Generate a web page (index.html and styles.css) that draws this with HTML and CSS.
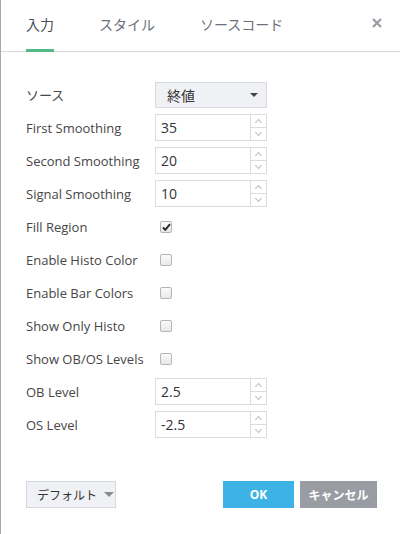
FILE: index.html
```html
<!DOCTYPE html>
<html>
<head>
<meta charset="utf-8">
<link rel="stylesheet" href="styles.css">
</head>
<body>
<div class="dialog">
  <div class="tabs">
    <div class="tab active">入力</div>
    <div class="tab">スタイル</div>
    <div class="tab">ソースコード</div>
    <div class="close"><svg width="10" height="10" viewBox="0 0 10 10"><path d="M1 1 L9 9 M9 1 L1 9" stroke="#9a9ca3" stroke-width="2.2" fill="none"/></svg></div>
  </div>
  <div class="content">
    <div class="row"><div class="label">ソース</div><div class="select"><span>終値</span><span class="caret"></span></div></div>
    <div class="row"><div class="label">First Smoothing</div><div class="input"><span class="val">35</span><span class="spin"><span class="up"></span><span class="down"></span></span></div></div>
    <div class="row"><div class="label">Second Smoothing</div><div class="input"><span class="val">20</span><span class="spin"><span class="up"></span><span class="down"></span></span></div></div>
    <div class="row"><div class="label">Signal Smoothing</div><div class="input"><span class="val">10</span><span class="spin"><span class="up"></span><span class="down"></span></span></div></div>
    <div class="row"><div class="label">Fill Region</div><div class="cb checked"><svg width="9" height="8" viewBox="0 0 9 8"><path d="M1 4.5 L3.3 6.8 L8 1.2" fill="none" stroke="#2e2e2e" stroke-width="2"/></svg></div></div>
    <div class="row"><div class="label">Enable Histo Color</div><div class="cb"></div></div>
    <div class="row"><div class="label">Enable Bar Colors</div><div class="cb"></div></div>
    <div class="row"><div class="label">Show Only Histo</div><div class="cb"></div></div>
    <div class="row"><div class="label">Show OB/OS Levels</div><div class="cb"></div></div>
    <div class="row"><div class="label">OB Level</div><div class="input"><span class="val">2.5</span><span class="spin"><span class="up"></span><span class="down"></span></span></div></div>
    <div class="row"><div class="label">OS Level</div><div class="input"><span class="val">-2.5</span><span class="spin"><span class="up"></span><span class="down"></span></span></div></div>
  </div>
  <div class="footer">
    <div class="btn default">デフォルト<span class="caret2"></span></div>
    <div class="right">
      <div class="btn ok">OK</div>
      <div class="btn cancel">キャンセル</div>
    </div>
  </div>
</div>
</body>
</html>
```
FILE: styles.css
```css
html, body { margin: 0; padding: 0; background: #fff; }
body { font-family: "Open Sans", "Noto Sans CJK JP", sans-serif; color: #4a4a4a; }
.dialog { width: 399px; height: 534px; border-left: 1px solid #a8a8a8; position: relative; box-sizing: content-box; }
.tabs { height: 52px; border-bottom: 1px solid #d9d9d9; display: flex; align-items: stretch; padding-left: 25px; box-sizing: border-box; }
.tab { font-family: "Noto Sans CJK JP", sans-serif; font-size: 14px; color: #6b707b; margin-right: 45px; display: flex; align-items: center; padding-bottom: 3px; box-sizing: border-box; border-bottom: 3px solid transparent; margin-bottom: -1px; padding-top: 1px; white-space: nowrap; }
.tab.active { color: #4a4e57; border-bottom-color: #53b987; }
.close { margin-left: auto; margin-right: 18px; display: flex; align-items: center; padding-bottom: 6px; }
.content { padding: 26px 0 0 25px; }
.row { height: 33px; display: flex; align-items: center; }
.label { width: 129px; font-size: 13px; color: #464646; }
.select { width: 112px; height: 26px; box-sizing: border-box; border: 1px solid #d6d9de; background: #f0f1f4; display: flex; align-items: center; justify-content: space-between; padding: 0 8px 0 11px; font-family: "Noto Sans CJK JP", sans-serif; font-size: 14px; color: #333; }
.caret { width: 0; height: 0; border-left: 4px solid transparent; border-right: 4px solid transparent; border-top: 4px solid #444; margin-top: 1px; }
.input { width: 112px; height: 27px; box-sizing: border-box; border: 1px solid #dcdcdc; display: flex; background: #fff; }
.val { flex: 1; padding-left: 5px; font-size: 14px; color: #333; display: flex; align-items: center; }
.spin { width: 15px; border-left: 1px solid #dcdcdc; display: flex; flex-direction: column; }
.up, .down { flex: 1; position: relative; }
.up { border-bottom: 1px solid #dcdcdc; }
.up::after, .down::after { content: ""; position: absolute; left: 5px; width: 4px; height: 4px; border-left: 1px solid #b8bcc4; border-top: 1px solid #b8bcc4; }
.up::after { top: 5px; transform: rotate(45deg); }
.down::after { top: 2px; transform: rotate(225deg); }
.cb { width: 12px; height: 12px; box-sizing: border-box; border: 1px solid #b5b5b5; border-radius: 2px; background: linear-gradient(#fbfbfb, #e8e8e8); margin-left: 5px; display: flex; align-items: center; justify-content: center; }
.footer { position: absolute; left: 25px; right: 23px; top: 481px; display: flex; justify-content: space-between; }
.right { display: flex; gap: 6px; }
.btn { height: 27px; box-sizing: border-box; display: flex; align-items: center; justify-content: center; font-family: "Noto Sans CJK JP", sans-serif; font-size: 12px; white-space: nowrap; }
.default { width: 90px; border: 1px solid #d5d8de; background: #f0f1f5; color: #333; justify-content: flex-start; padding-left: 10px; font-size: 12px; }
.caret2 { width: 0; height: 0; border-left: 5px solid transparent; border-right: 5px solid transparent; border-top: 5px solid #8a8c92; margin-left: 7px; }
.ok { width: 71px; background: #3cb3e4; color: #fff; font-weight: bold; font-family: "Open Sans", sans-serif; font-size: 12px; }
.cancel { width: 77px; background: #9a9ca3; color: #fff; font-weight: bold; }
```
